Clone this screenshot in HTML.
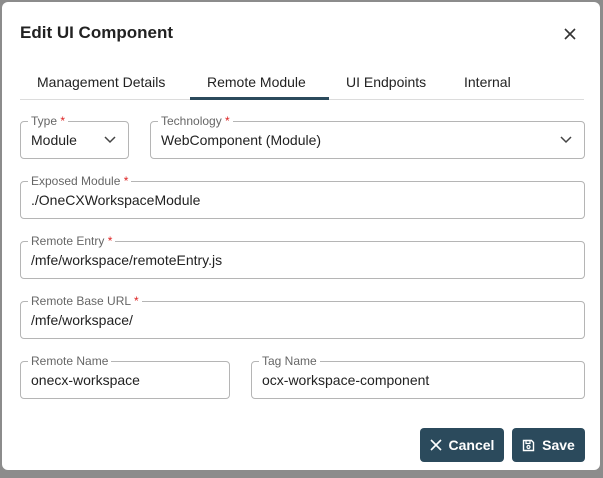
<!DOCTYPE html><html><head><style>
body{margin:0;width:603px;height:478px;background:#8c8c8c;font-family:"Liberation Sans",sans-serif;overflow:hidden;position:relative}
.d{position:absolute;left:2px;top:2px;width:598px;height:468px;background:#fff;border-radius:6px}
.a{position:absolute}
.t{left:20px;top:23px;font-size:17px;font-weight:bold;color:#222}
.tabs span{position:absolute;top:74px;font-size:14px;color:#222}
.line{left:20px;top:99px;width:564px;height:1px;background:#dcdcdc}
.ul{left:190px;top:97px;width:139px;height:3px;background:#2b4a5c}
.f{position:absolute;border:1px solid #b5b5b5;border-radius:4px;box-sizing:border-box}
.f label{position:absolute;left:7px;top:-8px;background:#fff;padding:0 3px;font-size:12px;color:#666;line-height:14px}
.f label b{color:#d22;font-weight:normal}
.f .v{position:absolute;left:10px;top:10px;font-size:14px;color:#222}
.chev{position:absolute;right:12px;top:14px}
.btn{position:absolute;top:428px;height:34px;background:#2b4a5c;color:#fff;border-radius:4px;font-size:14px;font-weight:bold;display:flex;align-items:center;justify-content:center;gap:7px}
</style></head><body>
<div class="d"></div>
<div class="a t">Edit UI Component</div>
<svg class="a" style="left:564px;top:28px" width="12" height="12" viewBox="0 0 12 12"><path d="M1 1L11 11M11 1L1 11" stroke="#333" stroke-width="1.6"/></svg>
<div class="tabs"><span style="left:37px">Management Details</span><span style="left:207px">Remote Module</span><span style="left:346px">UI Endpoints</span><span style="left:464px">Internal</span></div>
<div class="a line"></div><div class="a ul"></div>
<div class="f" style="left:20px;top:121px;width:109px;height:38px"><label>Type <b>*</b></label><div class="v">Module</div><svg class="chev" width="12" height="8" viewBox="0 0 12 8"><path d="M1 1L6 6L11 1" fill="none" stroke="#444" stroke-width="1.5"/></svg></div>
<div class="f" style="left:150px;top:121px;width:435px;height:38px"><label>Technology <b>*</b></label><div class="v">WebComponent (Module)</div><svg class="chev" width="12" height="8" viewBox="0 0 12 8"><path d="M1 1L6 6L11 1" fill="none" stroke="#444" stroke-width="1.5"/></svg></div>
<div class="f" style="left:20px;top:181px;width:565px;height:38px"><label>Exposed Module <b>*</b></label><div class="v">./OneCXWorkspaceModule</div></div>
<div class="f" style="left:20px;top:241px;width:565px;height:38px"><label>Remote Entry <b>*</b></label><div class="v">/mfe/workspace/remoteEntry.js</div></div>
<div class="f" style="left:20px;top:301px;width:565px;height:38px"><label>Remote Base URL <b>*</b></label><div class="v">/mfe/workspace/</div></div>
<div class="f" style="left:20px;top:361px;width:210px;height:38px"><label>Remote Name</label><div class="v">onecx-workspace</div></div>
<div class="f" style="left:251px;top:361px;width:334px;height:38px"><label>Tag Name</label><div class="v">ocx-workspace-component</div></div>
<div class="btn" style="left:420px;width:84px"><svg width="12" height="12" viewBox="0 0 12 12"><path d="M1 1L11 11M11 1L1 11" stroke="#fff" stroke-width="1.6"/></svg>Cancel</div>
<div class="btn" style="left:512px;width:73px"><svg width="13" height="13" viewBox="0 0 13 13"><path d="M1.5 1.5H9.5L11.5 3.5V11.5H1.5Z" fill="none" stroke="#fff" stroke-width="1.4"/><rect x="4" y="1.5" width="4" height="3" fill="none" stroke="#fff" stroke-width="1.2"/><circle cx="6.5" cy="8" r="1.5" fill="none" stroke="#fff" stroke-width="1.2"/></svg>Save</div>
</body></html>
